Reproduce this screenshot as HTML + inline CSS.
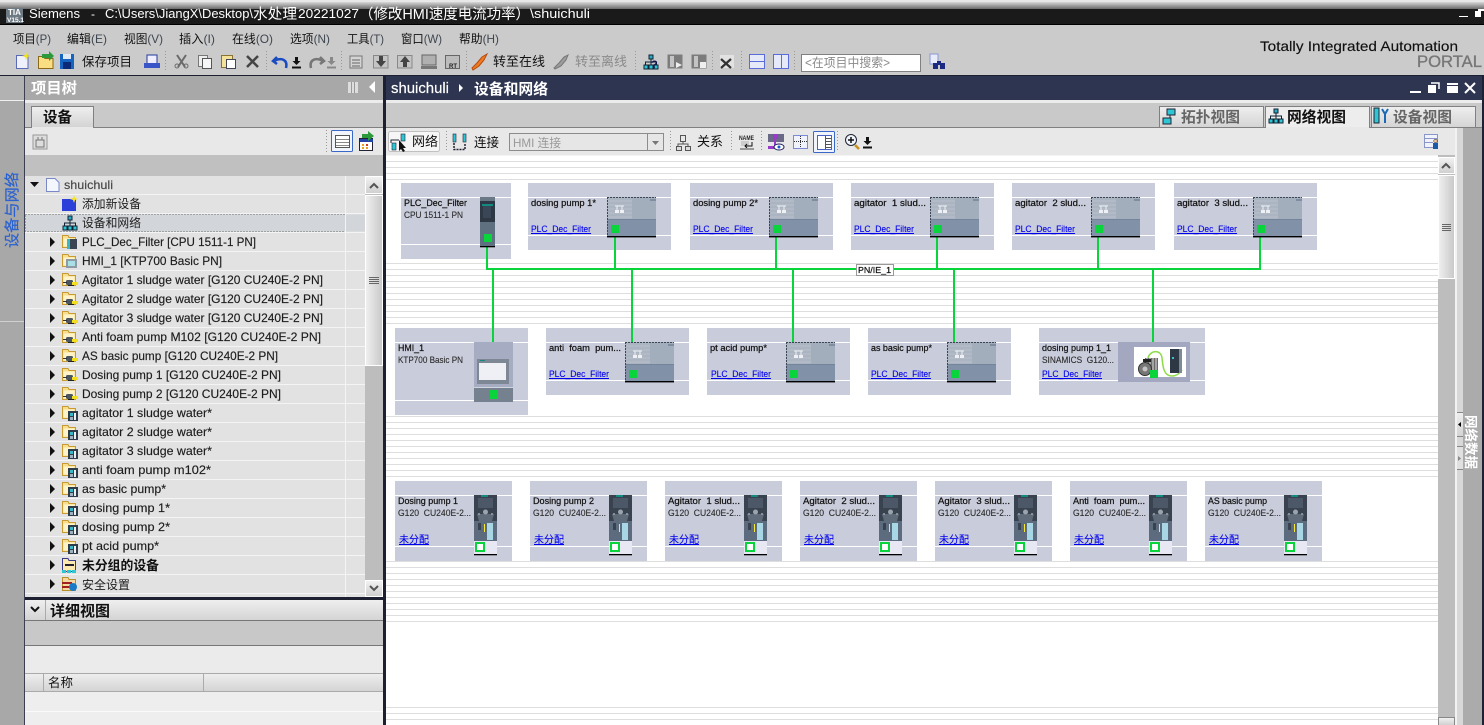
<!DOCTYPE html>
<html><head><meta charset="utf-8"><title>Siemens TIA Portal</title>
<style>
html,body{margin:0;padding:0;background:#fff;width:1484px;height:725px;overflow:hidden}
svg{display:block}
text{font-family:"Liberation Sans","Noto Sans CJK SC",sans-serif;font-size:12px;fill:#222;white-space:pre}
.m{font-size:12px;fill:#111}
.m tspan{fill:#3e4650}
.w{fill:#fff}
.b{font-weight:bold}
.d{font-size:9px;fill:#111;stroke:#111;stroke-width:.22px}
.ds{font-size:9px;fill:#2c2c2c;stroke:#2c2c2c;stroke-width:.12px}
.l{font-size:9px;fill:#0000ee;stroke:#0000ee;stroke-width:.1px}
.g{fill:#8a8a8a}
.tr{font-size:12px;fill:#1c1c1c;stroke:#1c1c1c;stroke-width:.15px}
</style></head><body>
<svg width="1484" height="725" viewBox="0 0 1484 725" xmlns="http://www.w3.org/2000/svg">
<defs>
<linearGradient id="gt" x1="0" y1="0" x2="0" y2="1"><stop offset="0" stop-color="#d8d8d8"/><stop offset="1" stop-color="#6a6a6a"/></linearGradient>
<linearGradient id="gh" x1="0" y1="0" x2="0" y2="1"><stop offset="0" stop-color="#efefef"/><stop offset="1" stop-color="#d4d4d4"/></linearGradient>
<linearGradient id="gs" x1="0" y1="0" x2="1" y2="0"><stop offset="0" stop-color="#f0f0f0"/><stop offset="1" stop-color="#c8c8c8"/></linearGradient>
<linearGradient id="gv" x1="0" y1="0" x2="0" y2="1"><stop offset="0" stop-color="#f2f2f2"/><stop offset="1" stop-color="#cfcfcf"/></linearGradient>
<pattern id="hl" x="386" y="161" width="10" height="6" patternUnits="userSpaceOnUse"><rect width="10" height="1" fill="#dedede"/></pattern>

<symbol id="drv" width="49" height="41" viewBox="0 0 49 41">
<rect width="49" height="40" fill="#a3aebc"/><rect width="25" height="22" fill="#abb5c2"/>
<path d="M1 4H25M1 8H25M1 12H25M1 16H25M1 20H25" stroke="#b7c0cb" stroke-width="1"/>
<rect y="22" width="49" height="18" fill="#8191a8"/><rect y="22" width="49" height="1" fill="#74849b"/>
<rect x="43" y="2" width="6" height="2" fill="#7f8da0"/>
<path d="M8 9H17M10 9V13M15 9V13" stroke="#eef0f3" fill="none"/><rect x="8" y="13" width="4" height="3" fill="#eef0f3"/><rect x="13" y="13" width="4" height="3" fill="#eef0f3"/>
<path d="M0 .5H49M.5 0V39" stroke="#3d4655" stroke-dasharray="2 1" fill="none"/>
<rect y="39" width="49" height="1.4" fill="#000"/>
<rect x="4" y="28" width="8" height="8" fill="#0ad43c"/>
</symbol>

<symbol id="g120" width="23" height="61" viewBox="0 0 23 61">
<rect width="23" height="60" fill="#5d6b7e"/><rect width="23" height="26" fill="#39434f"/>
<rect x="7" y="0" width="7" height="2" fill="#128a80"/><rect x="4" y="3" width="15" height="10" fill="#4c5868"/>
<path d="M3 19H20L18 26H5Z" fill="#5f6b79"/><circle cx="11.500" cy="17" r="2.500" fill="#9aa4ae"/>
<circle cx="5" cy="19" r="1" fill="#98a2ad"/><circle cx="18" cy="19" r="1" fill="#98a2ad"/>
<rect x="13" y="28" width="6" height="17" fill="#a8d6e4"/><rect x="4" y="28" width="3" height="7" fill="#39434f"/><rect x="10" y="29" width="1" height="8" fill="#f4e63c"/>
<rect y="46" width="23" height="13" fill="#e8e8f4"/>
<rect x="2" y="48" width="8" height="8" fill="#fff" stroke="#0ad43c" stroke-width="2"/>
<rect y="59" width="23" height="1.300" fill="#000"/>
</symbol>

<symbol id="fold" width="16" height="16" viewBox="0 0 16 16">
<path d="M.5 1.500H6L7 3.500H13.500V13.500H.5Z" fill="#f8df90" stroke="#c89a30"/><rect x="1.500" y="4.500" width="11" height="8" fill="#fff3c9"/>
</symbol>
<symbol id="fc" width="16" height="16" viewBox="0 0 16 16"><use href="#fold"/><rect x="5" y="5" width="10" height="10" fill="#3a4653"/><rect x="5" y="5" width="3" height="10" fill="#39b8c8"/></symbol>
<symbol id="fh" width="16" height="16" viewBox="0 0 16 16"><use href="#fold"/><rect x="4" y="6" width="11" height="9" fill="#8e9aa6"/><rect x="6" y="8" width="7" height="5" fill="#a8e0e6"/></symbol>
<symbol id="fa" width="16" height="16" viewBox="0 0 16 16"><use href="#fold"/><rect x="4" y="8" width="7" height="5" rx="1.500" fill="#4c5660"/><rect x="1" y="10" width="4" height="1" fill="#333"/><rect x="10" y="10" width="6" height="3" fill="#f2e01e"/><rect x="6" y="13" width="6" height="1" fill="#222"/></symbol>
<symbol id="fb" width="16" height="16" viewBox="0 0 16 16"><use href="#fold"/><rect x="6" y="6" width="10" height="10" fill="#2f3c49"/><rect x="8" y="8" width="3" height="3" fill="#39b8c8"/><rect x="12" y="8" width="2" height="7" fill="#eef0f3"/><rect x="8" y="12" width="3" height="3" fill="#9fb2c0"/></symbol>
<symbol id="net" width="16" height="16" viewBox="0 0 16 16"><rect x="6" y="1" width="4" height="4" fill="#2aa8c4" stroke="#123"/><path d="M8 5V8M2.500 11V8H13.500V11M8 8V11" stroke="#123" fill="none"/><rect x="1" y="11" width="4" height="4" fill="#2ec6d4" stroke="#123"/><rect x="6" y="11" width="4" height="4" fill="#2ec6d4" stroke="#123"/><rect x="11" y="11" width="4" height="4" fill="#2ec6d4" stroke="#123"/></symbol>
<symbol id="gr" width="16" height="16" viewBox="0 0 16 16"><rect x="1" y="2" width="12" height="12" fill="#d4d4d4" stroke="#777"/><path d="M3 6H11M3 9H11M3 12H11" stroke="#666"/></symbol>
<symbol id="dl" width="9" height="12" viewBox="0 0 9 12"><path d="M3 0H6V4H8.500L4.500 8L.5 4H3ZM0 9.500H9V11.500H0Z"/></symbol>
</defs>

<!-- window chrome -->
<rect width="1484" height="725" fill="#fff"/>
<rect width="1484" height="2" fill="#e8e8e8"/><rect y="2" width="1484" height="7" fill="url(#gt)"/>
<rect y="9" width="1484" height="15" fill="#1a1a1a"/>
<rect x="6" y="8" width="17" height="15" fill="#6d7a84"/>
<text x="8" y="15" style="font-size:8px" class="w b">TIA</text><text x="7" y="22" style="font-size:6.500px" class="w b">V15.1</text>
<text x="29" y="18" class="w" style="font-size:13px" textLength="51" lengthAdjust="spacingAndGlyphs">Siemens</text>
<text x="91" y="18" class="w">-</text>
<text x="105" y="18" class="w" style="font-size:13px" textLength="148" lengthAdjust="spacingAndGlyphs">C:\Users\JiangX\Desktop\</text>
<text x="253" y="19" class="w" style="font-size:14.500px" textLength="44" lengthAdjust="spacingAndGlyphs">水处理</text>
<text x="298" y="18" class="w" style="font-size:13px" textLength="61" lengthAdjust="spacingAndGlyphs">20221027</text>
<text x="359" y="19" class="w" style="font-size:14.500px" textLength="171" lengthAdjust="spacingAndGlyphs">（修改HMI速度电流功率）</text>
<text x="530" y="18" class="w" style="font-size:13px" textLength="60" lengthAdjust="spacingAndGlyphs">\shuichuli</text>
<rect x="1459" y="16" width="9" height="1" fill="#fff"/><rect x="1475" y="11" width="6" height="6" fill="#fff"/><rect x="1478" y="9" width="6" height="2" fill="#fff"/>

<rect y="24.500" width="1484" height="51" fill="#cbcbcb"/>
<rect y="24" width="1484" height="1" fill="#000"/>
<g class="menu">
<text x="13" y="43" class="m" textLength="38" lengthAdjust="spacingAndGlyphs">项目<tspan>(P)</tspan></text>
<text x="67" y="43" class="m" textLength="40" lengthAdjust="spacingAndGlyphs">编辑<tspan>(E)</tspan></text>
<text x="124" y="43" class="m" textLength="39" lengthAdjust="spacingAndGlyphs">视图<tspan>(V)</tspan></text>
<text x="179" y="43" class="m" textLength="36" lengthAdjust="spacingAndGlyphs">插入<tspan>(I)</tspan></text>
<text x="232" y="43" class="m" textLength="41" lengthAdjust="spacingAndGlyphs">在线<tspan>(O)</tspan></text>
<text x="290" y="43" class="m" textLength="40" lengthAdjust="spacingAndGlyphs">选项<tspan>(N)</tspan></text>
<text x="347" y="43" class="m" textLength="37" lengthAdjust="spacingAndGlyphs">工具<tspan>(T)</tspan></text>
<text x="401" y="43" class="m" textLength="41" lengthAdjust="spacingAndGlyphs">窗口<tspan>(W)</tspan></text>
<text x="459" y="43" class="m" textLength="40" lengthAdjust="spacingAndGlyphs">帮助<tspan>(H)</tspan></text>
</g>

<!-- toolbar icons -->
<path d="M16.500 55.500H28V68.500H16.500Z" fill="#eef1fb" stroke="#5a6ab8"/><path d="M26 52L27 55L30 56L27 57L26 60L25 57L22 56L25 55Z" fill="#f2e41c"/>
<path d="M38.500 56.500H43L45 58.500H53V68.500H38.500Z" fill="#f9df82" stroke="#8a6a18"/><path d="M42 54H49V51L54 56L49 61V58H42Z" fill="#2c9a3a"/>
<rect x="60" y="54" width="14" height="15" fill="#1565c0"/><rect x="63" y="54" width="8" height="5" fill="#dfe9f6"/><rect x="63" y="62" width="8" height="7" fill="#0a2a78"/>
<text x="82" y="66" class="m" style="font-size:12.500px" textLength="50" lengthAdjust="spacingAndGlyphs">保存项目</text>
<rect x="147" y="55" width="10" height="9" fill="#eef" stroke="#223a9c"/><rect x="144" y="63" width="16" height="5" fill="#3a55c8"/>
<path d="M165.500 51V72M266.500 51V72M341.500 51V72M466.500 51V72M635.500 51V72M712.500 51V72M741.500 51V72M794.500 51V72" stroke="#999" stroke-dasharray="1 2"/>
<path d="M177 55L185 67M186 55L178 67" stroke="#6a6a6a" stroke-width="2"/><circle cx="177" cy="66" r="2" fill="none" stroke="#6a6a6a"/><circle cx="186" cy="66" r="2" fill="none" stroke="#6a6a6a"/>
<rect x="198.500" y="55.500" width="9" height="11" fill="#eee" stroke="#777"/><rect x="202.500" y="58.500" width="9" height="10" fill="#f6f6f6" stroke="#555"/>
<rect x="221.500" y="55.500" width="11" height="12" fill="#f4e19a" stroke="#8a7330"/><rect x="226.500" y="59.500" width="9" height="9" fill="#fff" stroke="#445"/>
<path d="M247 56L258 67M258 56L247 67" stroke="#444" stroke-width="2.500"/>
<path d="M277 57L273 61L277 64M274 61C282 57 288 60 286 68" fill="none" stroke="#1a4cc0" stroke-width="2.500"/>
<use href="#dl" x="292" y="57" fill="#111"/>
<path d="M320 57L324 61L320 64M323 61C315 57 309 60 311 68" fill="none" stroke="#777" stroke-width="2.500"/>
<use href="#dl" x="327" y="57" fill="#888"/>
<use href="#gr" x="349" y="54"/><path d="M373.500 55.500H388V68H373.500Z" fill="#c4c4c4" stroke="#888"/><path d="M379 56H383V61H386L381 67L376 61H379Z" fill="#444"/>
<path d="M397.500 55.500H412V68H397.500Z" fill="#c4c4c4" stroke="#888"/><path d="M403 67H407V62H410L405 56L400 62H403Z" fill="#444"/>
<rect x="422" y="55" width="14" height="10" fill="#b0b0b0" stroke="#666"/><rect x="421" y="66" width="16" height="3" fill="#777"/>
<rect x="445.500" y="55.500" width="14" height="13" fill="#bcbcbc" stroke="#666"/><text x="449" y="68" style="font-size:6px" class="b">RT</text>
<path d="M472 68L477 63L482 57L487 54L484 60L479 66L473 70Z" fill="#ef7a22" stroke="#b54b0a"/>
<text x="493" y="66" class="m" style="font-size:13px" textLength="52" lengthAdjust="spacingAndGlyphs">转至在线</text>
<path d="M554 68L559 63L564 57L568 55L566 60L561 66L555 69Z" fill="#9c9c9c" stroke="#777"/>
<text x="575" y="66" class="m g" style="font-size:13px" textLength="52" lengthAdjust="spacingAndGlyphs">转至离线</text>
<use href="#net" x="643" y="54"/><text x="651" y="68" class="b" style="font-size:11px;fill:#111150">?</text>
<rect x="667.500" y="54.500" width="15" height="14" fill="#7c7c7c"/><rect x="670" y="56" width="4" height="11" fill="#c4c4c4"/><path d="M676 62L682 65L676 68Z" fill="#eee"/>
<rect x="691.500" y="54.500" width="15" height="14" fill="#7c7c7c"/><rect x="694" y="56" width="4" height="11" fill="#c4c4c4"/><rect x="700" y="62" width="6" height="6" fill="#eee"/>
<rect x="720" y="55" width="14" height="13" fill="#e2e2e2"/><path d="M721 59L731 68M731 59L721 68" stroke="#333" stroke-width="2.200"/>
<rect x="749.500" y="54.500" width="15" height="14" fill="#e6e9f8" stroke="#5a6cd8"/><path d="M749 61.500H765" stroke="#5a6cd8"/>
<rect x="773.500" y="54.500" width="15" height="14" fill="#e6e9f8" stroke="#5a6cd8"/><path d="M781.500 54V69" stroke="#5a6cd8"/>
<rect x="801.500" y="54.500" width="119" height="17" fill="#fff" stroke="#808080"/>
<text x="805" y="67" class="m g" style="font-size:12.500px" textLength="85" lengthAdjust="spacingAndGlyphs">&lt;在项目中搜索&gt;</text>
<rect x="930" y="54" width="8" height="10" fill="#e8ecfa" stroke="#8898d8"/><rect x="933" y="63" width="5" height="6" fill="#1a2a80"/><rect x="940" y="63" width="5" height="6" fill="#1a2a80"/><rect x="937" y="61" width="4" height="4" fill="#1a2a80"/>

<text x="1260" y="51" style="font-size:14px;fill:#111;stroke:#111;stroke-width:.15px" textLength="198" lengthAdjust="spacingAndGlyphs">Totally Integrated Automation</text>
<text x="1417" y="67" style="font-size:17px;fill:#777;stroke:#777;stroke-width:.35px" textLength="65" lengthAdjust="spacingAndGlyphs">PORTAL</text>
<rect y="75" width="1484" height="1" fill="#1c2030"/>

<!-- left strip -->
<rect y="76" width="24" height="649" fill="#a8a8a8"/><rect y="76" width="24" height="24" fill="#b2b2b2"/>
<rect y="100" width="24" height="1" fill="#efefef"/><rect y="321" width="24" height="1" fill="#cfcfcf"/>
<rect x="24" y="76" width="1" height="649" fill="#3a3f52"/>
<text transform="translate(17,248) rotate(-90)" style="font-size:15px;fill:#2a62d0;stroke:#2a62d0;stroke-width:.2px" textLength="76" lengthAdjust="spacingAndGlyphs">设备与网络</text>

<!-- project tree -->
<rect x="25" y="76" width="358" height="24" fill="#a8a8a8"/>
<text x="31" y="93" class="w b" style="font-size:15px" textLength="46" lengthAdjust="spacingAndGlyphs">项目树</text>
<rect x="348" y="82" width="10" height="11" fill="#ddd"/><path d="M351.500 82V93M354.500 82V93" stroke="#999"/>
<path d="M375 81V93L369 87Z" fill="#fff"/>
<rect x="25" y="100" width="358" height="3" fill="#ececec"/>
<rect x="25" y="103" width="358" height="24" fill="#c9c9c9"/>
<path d="M31.500 127V106.500H93.500V127" fill="url(#gh)" stroke="#808080"/>
<text x="43" y="122" class="b" style="font-size:15px;fill:#111" textLength="29" lengthAdjust="spacingAndGlyphs">设备</text>
<rect x="25" y="127" width="358" height="1" fill="#808080"/><rect x="32" y="127" width="61" height="1" fill="#e8e8e8"/>
<rect x="25" y="128" width="358" height="27" fill="#e8e8e8"/>
<rect x="33" y="135" width="14" height="14" fill="#ddd" stroke="#999"/><path d="M36 140H44V147H36ZM38 137V140M42 137V140" fill="none" stroke="#777"/>
<path d="M326.500 130V153" stroke="#999" stroke-dasharray="1 2"/>
<rect x="331.500" y="130.500" width="21" height="21" rx="1" fill="#f2f4fc" stroke="#3a68c8"/><rect x="335.500" y="135.500" width="14" height="12" fill="#fff" stroke="#555"/><path d="M336 139.500H349M336 142.500H349M336 145.500H349" stroke="#888"/>
<rect x="359.500" y="138.500" width="13" height="12" fill="#fff" stroke="#223"/><rect x="360" y="139" width="13" height="3" fill="#2244aa"/><rect x="362" y="144" width="2" height="2" fill="#e8a020"/><rect x="366" y="144" width="2" height="2" fill="#d04020"/><rect x="362" y="147" width="2" height="2" fill="#e8a020"/><rect x="366" y="147" width="2" height="2" fill="#e8a020"/>
<path d="M362 134H368V131L374 136L368 141V138H362Z" fill="#2c9a3a"/>
<rect x="25" y="155" width="358" height="21" fill="#c0c0c0"/>

<rect x="25" y="176" width="340" height="421" fill="#e2e2e2"/>
<path d="M25 194.500H365M25 213.500H365M25 232.500H365M25 251.500H365M25 270.500H365M25 289.500H365M25 308.500H365M25 327.500H365M25 346.500H365M25 365.500H365M25 384.500H365M25 403.500H365M25 422.500H365M25 441.500H365M25 460.500H365M25 479.500H365M25 498.500H365M25 517.500H365M25 536.500H365M25 555.500H365M25 574.500H365M25 593.500H365" stroke="#f4f4f4"/>
<rect x="25.500" y="214.500" width="340" height="17" fill="#d2d6da"/>
<path d="M25.500 214.500H345.500V231.500H25.500Z" fill="none" stroke="#666" stroke-dasharray="1 2"/>
<path d="M345.500 176V597" stroke="#f4f4f4"/>
<path d="M30 182H39L34.500 187Z" fill="#111"/>
<path d="M46.500 178.500H55L59 182.500V191.500H46.500Z" fill="#f4f6fe" stroke="#7a88c8"/>
<text x="64" y="189" class="tr" style="fill:#444;stroke:#444" textLength="49" lengthAdjust="spacingAndGlyphs">shuichuli</text>
<rect x="62" y="199" width="14" height="12" fill="#2a40d8"/><path d="M74 195L75 198L78 199L75 200L74 203L73 200L70 199L73 198Z" fill="#f5e42a"/>
<text x="82" y="208" class="tr" style="stroke-width:0" textLength="59" lengthAdjust="spacingAndGlyphs">添加新设备</text>
<use href="#net" x="62" y="215"/>
<text x="82" y="227" class="tr" style="stroke-width:0" textLength="59" lengthAdjust="spacingAndGlyphs">设备和网络</text>

<!-- arrows -->
<path d="M50 237L55 242L50 247ZM50 256L55 261L50 266ZM50 275L55 280L50 285ZM50 294L55 299L50 304ZM50 313L55 318L50 323ZM50 332L55 337L50 342ZM50 351L55 356L50 361ZM50 370L55 375L50 380ZM50 389L55 394L50 399ZM50 408L55 413L50 418ZM50 427L55 432L50 437ZM50 446L55 451L50 456ZM50 465L55 470L50 475ZM50 484L55 489L50 494ZM50 503L55 508L50 513ZM50 522L55 527L50 532ZM50 541L55 546L50 551ZM50 560L55 565L50 570ZM50 579L55 584L50 589Z" fill="#111"/>

<use href="#fc" x="62" y="234"/><use href="#fh" x="62" y="253"/>
<use href="#fa" x="62" y="272"/><use href="#fa" x="62" y="291"/><use href="#fa" x="62" y="310"/><use href="#fa" x="62" y="329"/><use href="#fa" x="62" y="348"/><use href="#fa" x="62" y="367"/><use href="#fa" x="62" y="386"/>
<use href="#fb" x="62" y="405"/><use href="#fb" x="62" y="424"/><use href="#fb" x="62" y="443"/><use href="#fb" x="62" y="462"/><use href="#fb" x="62" y="481"/><use href="#fb" x="62" y="500"/><use href="#fb" x="62" y="519"/><use href="#fb" x="62" y="538"/>
<path d="M62.500 558.500H68L69 560.500H75.500V571.500H62.500Z" fill="#fbe9ae" stroke="#3a3a8a"/><path d="M65 565H74" stroke="#223" stroke-width="2"/><rect x="62" y="570" width="4" height="3" fill="#2ec6d4"/><rect x="67" y="570" width="4" height="3" fill="#2ec6d4"/><rect x="72" y="570" width="4" height="3" fill="#2ec6d4"/>
<path d="M62.500 577.500H68L69 579.500H75.500V590.500H62.500Z" fill="#f4d8a0" stroke="#b98e2c"/><rect x="62" y="582" width="10" height="2" fill="#a02020"/><rect x="62" y="586" width="8" height="2" fill="#a02020"/><circle cx="73" cy="587" r="4" fill="#1a7ac8"/>

<text x="82" y="246" class="tr" textLength="174" lengthAdjust="spacingAndGlyphs">PLC_Dec_Filter [CPU 1511-1 PN]</text>
<text x="82" y="265" class="tr" textLength="140" lengthAdjust="spacingAndGlyphs">HMI_1 [KTP700 Basic PN]</text>
<text x="82" y="284" class="tr" textLength="241" lengthAdjust="spacingAndGlyphs">Agitator 1 sludge water [G120 CU240E-2 PN]</text>
<text x="82" y="303" class="tr" textLength="241" lengthAdjust="spacingAndGlyphs">Agitator 2 sludge water [G120 CU240E-2 PN]</text>
<text x="82" y="322" class="tr" textLength="241" lengthAdjust="spacingAndGlyphs">Agitator 3 sludge water [G120 CU240E-2 PN]</text>
<text x="82" y="341" class="tr" textLength="239" lengthAdjust="spacingAndGlyphs">Anti foam pump M102 [G120 CU240E-2 PN]</text>
<text x="82" y="360" class="tr" textLength="196" lengthAdjust="spacingAndGlyphs">AS basic pump [G120 CU240E-2 PN]</text>
<text x="82" y="379" class="tr" textLength="199" lengthAdjust="spacingAndGlyphs">Dosing pump 1 [G120 CU240E-2 PN]</text>
<text x="82" y="398" class="tr" textLength="199" lengthAdjust="spacingAndGlyphs">Dosing pump 2 [G120 CU240E-2 PN]</text>
<text x="82" y="417" class="tr" textLength="130" lengthAdjust="spacingAndGlyphs">agitator 1 sludge water*</text>
<text x="82" y="436" class="tr" textLength="130" lengthAdjust="spacingAndGlyphs">agitator 2 sludge water*</text>
<text x="82" y="455" class="tr" textLength="130" lengthAdjust="spacingAndGlyphs">agitator 3 sludge water*</text>
<text x="82" y="474" class="tr" textLength="129" lengthAdjust="spacingAndGlyphs">anti foam pump m102*</text>
<text x="82" y="493" class="tr" textLength="84" lengthAdjust="spacingAndGlyphs">as basic pump*</text>
<text x="82" y="512" class="tr" textLength="88" lengthAdjust="spacingAndGlyphs">dosing pump 1*</text>
<text x="82" y="531" class="tr" textLength="88" lengthAdjust="spacingAndGlyphs">dosing pump 2*</text>
<text x="82" y="550" class="tr" textLength="77" lengthAdjust="spacingAndGlyphs">pt acid pump*</text>
<text x="82" y="570" class="b" style="font-size:13px;fill:#111" textLength="77" lengthAdjust="spacingAndGlyphs">未分组的设备</text>
<text x="82" y="589" class="tr" style="stroke-width:0" textLength="48" lengthAdjust="spacingAndGlyphs">安全设置</text>

<!-- tree scrollbar -->
<rect x="365" y="176" width="18" height="421" fill="#bdbdbd"/>
<rect x="365.500" y="176.500" width="17" height="17" fill="url(#gv)" stroke="#fff"/>
<path d="M370 188L374 184L378 188" fill="none" stroke="#555" stroke-width="2"/>
<rect x="365.500" y="195.500" width="17" height="170" fill="url(#gs)" stroke="#fff"/>
<path d="M369 277.500H379M369 279.500H379M369 281.500H379M369 283.500H379" stroke="#666"/>
<rect x="365.500" y="580.500" width="17" height="16" fill="url(#gv)" stroke="#fff"/>
<path d="M370 586L374 590L378 586" fill="none" stroke="#555" stroke-width="2"/>

<!-- detail view -->
<rect x="25" y="597" width="358" height="3" fill="#1c2030"/>
<rect x="25" y="600" width="358" height="20" fill="url(#gh)"/>
<path d="M45.500 600V620" stroke="#aaa"/>
<path d="M31 607L35 611L39 607" fill="none" stroke="#111" stroke-width="2"/>
<text x="50" y="616" class="b" style="font-size:15px;fill:#111" textLength="60" lengthAdjust="spacingAndGlyphs">详细视图</text>
<rect x="25" y="620" width="358" height="1" fill="#777"/>
<rect x="25" y="621" width="358" height="24" fill="#c8c8c8"/>
<rect x="25" y="645" width="358" height="1" fill="#777"/>
<rect x="25" y="646" width="358" height="27" fill="#ebebeb"/>
<rect x="25" y="673" width="358" height="18" fill="url(#gh)"/>
<path d="M25 673.500H383M25 691.500H383M43.500 673V691M203.500 673V691" stroke="#aaa"/>
<text x="48" y="687" class="m" style="font-size:12.500px" textLength="25" lengthAdjust="spacingAndGlyphs">名称</text>
<rect x="25" y="692" width="358" height="33" fill="#eeeeee"/>
<rect x="25" y="711" width="358" height="1" fill="#fafafa"/>
<rect x="383" y="76" width="3" height="649" fill="#1c2030"/>

<!-- editor header -->
<rect x="386" y="76" width="1096" height="24" fill="#2e3550"/>
<text x="391" y="93" class="w" style="font-size:15px;stroke:#fff;stroke-width:.2px" textLength="58" lengthAdjust="spacingAndGlyphs">shuichuli</text>
<path d="M459 84L463 88L459 92Z" fill="#fff"/>
<text x="474" y="94" class="w b" style="font-size:15px" textLength="74" lengthAdjust="spacingAndGlyphs">设备和网络</text>
<rect x="1410" y="91" width="11" height="2" fill="#fff"/>
<rect x="1428" y="85" width="8" height="8" fill="#fff"/><path d="M1431 83H1439V89" fill="none" stroke="#fff" stroke-width="1.500"/>
<rect x="1447" y="83" width="11" height="10" fill="#fff"/><rect x="1447" y="85" width="11" height="1" fill="#2e3550"/>
<path d="M1465 83L1475 93M1475 83L1465 93" stroke="#fff" stroke-width="2"/>
<rect x="386" y="100" width="1096" height="3" fill="#ececec"/>
<rect x="386" y="103" width="1096" height="24" fill="#c9c9c9"/>
<rect x="386" y="127" width="1096" height="1" fill="#808080"/>

<!-- view tabs -->
<rect x="1159.500" y="106.500" width="104" height="21" fill="url(#gh)" stroke="#808080"/>
<rect x="1167" y="109" width="8" height="6" fill="#2ec6d4" stroke="#223"/><rect x="1163" y="118" width="8" height="6" fill="#2ec6d4" stroke="#223"/><path d="M1170 115V118" stroke="#223"/>
<text x="1181" y="122" class="b" style="font-size:15px;fill:#666" textLength="59" lengthAdjust="spacingAndGlyphs">拓扑视图</text>
<path d="M1265.500 128V106.500H1369.500V128" fill="#ededed" stroke="#808080"/><rect x="1266" y="127" width="103" height="2" fill="#e8e8e8"/>
<use href="#net" x="1268" y="108"/>
<text x="1287" y="122" class="b" style="font-size:15px;fill:#111" textLength="59" lengthAdjust="spacingAndGlyphs">网络视图</text>
<rect x="1371.500" y="106.500" width="104" height="21" fill="url(#gh)" stroke="#808080"/>
<rect x="1374" y="108" width="5" height="15" fill="#2ec6d4" stroke="#223"/><path d="M1382 109L1385 114L1388 109M1385 114V123" fill="none" stroke="#1a6ab8" stroke-width="2"/>
<text x="1393" y="122" class="b" style="font-size:15px;fill:#666" textLength="59" lengthAdjust="spacingAndGlyphs">设备视图</text>

<!-- editor toolbar -->
<rect x="386" y="128" width="1070" height="27" fill="#e8e8e8"/>
<rect x="388.500" y="131.500" width="51" height="20" rx="2" fill="#f6f6f6" stroke="#c0c0c0"/>
<rect x="392" y="143" width="4" height="7" fill="#2ec6d4" stroke="#223" stroke-width=".6"/><rect x="401" y="134" width="4" height="7" fill="#2ec6d4" stroke="#223" stroke-width=".6"/><path d="M391 143V140H399" fill="none" stroke="#223"/><path d="M399 140L399 151L401 149L403 152L405 151L403 148L406 148Z" fill="#111"/>
<text x="412" y="146" class="m" style="font-size:13px" textLength="26" lengthAdjust="spacingAndGlyphs">网络</text>
<path d="M446.500 131V152M670.500 131V152M731.500 131V152M761.500 131V152M837.500 131V152" stroke="#999" stroke-dasharray="1 2"/>
<rect x="453" y="134" width="3" height="8" fill="#2ec6d4" stroke="#223" stroke-width=".6"/><rect x="463" y="134" width="3" height="8" fill="#2ec6d4" stroke="#223" stroke-width=".6"/><path d="M454 143V149.500H465V143" fill="none" stroke="#223" stroke-width="1.500" stroke-dasharray="2 1"/>
<text x="474" y="147" class="m" style="font-size:13px" textLength="25" lengthAdjust="spacingAndGlyphs">连接</text>
<rect x="509.500" y="133.500" width="154" height="17" fill="#e6e6e6" stroke="#8c8c8c"/><path d="M647.500 134V150" stroke="#8c8c8c"/>
<path d="M652 141H659L655.500 145Z" fill="#777"/>
<text x="513" y="147" class="m" style="fill:#999" textLength="48" lengthAdjust="spacingAndGlyphs">HMI 连接</text>
<rect x="680.500" y="135.500" width="5" height="6" fill="none" stroke="#555"/><path d="M683 141V144M678 148V144H688V148" fill="none" stroke="#555"/><rect x="676.500" y="146.500" width="5" height="4" fill="#ddd" stroke="#555"/><rect x="685.500" y="146.500" width="5" height="4" fill="#ddd" stroke="#555"/>
<text x="697" y="146" class="m" style="font-size:13px" textLength="26" lengthAdjust="spacingAndGlyphs">关系</text>
<text x="739" y="140" class="b" style="font-size:6px;fill:#222" textLength="15" lengthAdjust="spacingAndGlyphs">NAME</text><path d="M741 141V146H749V141" fill="#ccc"/><path d="M752 142V146H745M747 144L745 146L747 148" fill="none" stroke="#111"/><rect x="740" y="148" width="14" height="2" fill="#999"/>
<rect x="768" y="134" width="16" height="8" fill="#6a6a88"/><rect x="773" y="134" width="5" height="5" fill="#9a3ac8"/><path d="M775 139V147" stroke="#9a3ac8" stroke-width="2"/><rect x="768" y="146" width="9" height="3" fill="#9a3ac8"/><ellipse cx="779" cy="147" rx="5" ry="3" fill="#fff" stroke="#226"/><circle cx="779" cy="147" r="1.500" fill="#1a5ac8"/>
<rect x="793.500" y="135.500" width="14" height="13" fill="#f0f2fc" stroke="#7a8ad8"/><path d="M794 141.500H807M800.500 136V148" stroke="#333" stroke-dasharray="1 1"/>
<rect x="813.500" y="131.500" width="21" height="21" rx="1" fill="#f2f4fc" stroke="#3a68c8"/><rect x="817.500" y="135.500" width="14" height="14" fill="#fff" stroke="#4a62c0"/><path d="M825.500 136V149M826 138.500H831M826 141.500H831M826 144.500H831M826 147.500H831" stroke="#555"/>
<circle cx="851" cy="140" r="5.500" fill="#eef4fc" stroke="#223"/><path d="M848 140H854M851 137V143" stroke="#111" stroke-width="1.500"/><path d="M855 145L859 149" stroke="#c89020" stroke-width="2.500"/>
<use href="#dl" x="863" y="137" fill="#111"/>
<rect x="1424.500" y="134.500" width="13" height="13" fill="#f0f2fc" stroke="#8a96c8"/><path d="M1425 138.500H1437M1425 142.500H1433" stroke="#8a96c8"/><rect x="1433" y="143" width="5" height="6" fill="#1a5aa8"/><circle cx="1435.500" cy="141" r="1.800" fill="#f0c8a0" stroke="#222" stroke-width=".5"/>

<!-- canvas -->
<rect x="386" y="155" width="1052" height="570" fill="#fff"/>
<rect x="386" y="155" width="1052" height="1" fill="#f4f4f4"/>
<rect x="386" y="161" width="1052" height="19" fill="url(#hl)"/>
<rect x="386" y="263" width="1052" height="61" fill="url(#hl)"/>
<g>
<path d="M386 416.500H1438M386 422.500H1438M386 428.500H1438M386 434.500H1438M386 440.500H1438M386 446.500H1438M386 452.500H1438M386 458.500H1438M386 464.500H1438M386 470.500H1438M386 476.500H1438M386 561.500H1438M386 567.500H1438M386 573.500H1438M386 579.500H1438M386 585.500H1438M386 591.500H1438M386 597.500H1438M386 603.500H1438M386 609.500H1438M386 615.500H1438M386 621.500H1438M386 707.500H1438M386 713.500H1438M386 719.500H1438" stroke="#dedede"/>
</g>

<!-- device boxes row 1 -->
<g fill="#c9ccda">
<rect x="401" y="183" width="110" height="76"/>
<rect x="528" y="183" width="143" height="67"/><rect x="690" y="183" width="143" height="67"/><rect x="851" y="183" width="143" height="67"/><rect x="1012" y="183" width="143" height="67"/><rect x="1174" y="183" width="143" height="67"/>
<rect x="395" y="328" width="133" height="87"/>
<rect x="546" y="328" width="143" height="67"/><rect x="707" y="328" width="143" height="67"/><rect x="868" y="328" width="143" height="67"/><rect x="1039" y="328" width="166" height="67"/>
<rect x="395" y="481" width="117" height="80"/><rect x="530" y="481" width="117" height="80"/><rect x="665" y="481" width="117" height="80"/><rect x="800" y="481" width="117" height="80"/><rect x="935" y="481" width="117" height="80"/><rect x="1070" y="481" width="117" height="80"/><rect x="1205" y="481" width="117" height="80"/>
</g>
<g stroke="#fff">
<path d="M401 197.500H511M401 244.500H511M528 197.500H671M528 235.500H671M690 197.500H833M690 235.500H833M851 197.500H994M851 235.500H994M1012 197.500H1155M1012 235.500H1155M1174 197.500H1317M1174 235.500H1317"/>
<path d="M395 342.500H528M395 400.500H528M546 342.500H689M546 380.500H689M707 342.500H850M707 380.500H850M868 342.500H1011M868 380.500H1011M1039 342.500H1205M1039 380.500H1205"/>
<path d="M395 495.500H512M395 546.500H512M530 495.500H647M530 546.500H647M665 495.500H782M665 546.500H782M800 495.500H917M800 546.500H917M935 495.500H1052M935 546.500H1052M1070 495.500H1187M1070 546.500H1187M1205 495.500H1322M1205 546.500H1322"/>
</g>

<!-- bus -->
<g stroke="#0ad43c" stroke-width="2" fill="none">
<path d="M487 247V269H1260V237M615 237V269M776 237V269M937 237V269M1098 237V269"/>
<path d="M493 269V342M632 269V342M793 269V342M954 269V342M1153 269V342"/>
</g>
<rect x="856.500" y="264.500" width="37" height="11" fill="#fff" stroke="#999"/>
<text x="858" y="273" class="d" style="font-size:8.500px" textLength="33" lengthAdjust="spacingAndGlyphs">PN/IE_1</text>

<!-- PLC -->
<rect x="480" y="197" width="15" height="50" fill="#5f7080"/><rect x="480" y="197" width="15" height="25" fill="#2e3845"/><rect x="480" y="197" width="15" height="4" fill="#6b7886"/><rect x="482" y="204" width="11" height="2" fill="#128a80"/><rect x="483" y="206" width="8" height="12" fill="#3a4656"/><rect x="480" y="246" width="15" height="1.300" fill="#000"/>
<rect x="484" y="234" width="8" height="8" fill="#0ad43c"/>
<text x="404" y="206" class="d" textLength="63" lengthAdjust="spacingAndGlyphs">PLC_Dec_Filter</text>
<text x="404" y="218" class="ds" textLength="59" lengthAdjust="spacingAndGlyphs">CPU 1511-1 PN</text>

<use href="#drv" x="607" y="197"/><use href="#drv" x="769" y="197"/><use href="#drv" x="930" y="197"/><use href="#drv" x="1091" y="197"/><use href="#drv" x="1253" y="197"/>
<text x="531" y="206" class="d" textLength="65" lengthAdjust="spacingAndGlyphs">dosing pump 1*</text>
<text x="693" y="206" class="d" textLength="65" lengthAdjust="spacingAndGlyphs">dosing pump 2*</text>
<text x="854" y="206" class="d" textLength="72" lengthAdjust="spacingAndGlyphs">agitator  1 slud...</text>
<text x="1015" y="206" class="d" textLength="71" lengthAdjust="spacingAndGlyphs">agitator  2 slud...</text>
<text x="1177" y="206" class="d" textLength="71" lengthAdjust="spacingAndGlyphs">agitator  3 slud...</text>
<g class="links">
<text x="531" y="232" class="l" textLength="60" lengthAdjust="spacingAndGlyphs">PLC_Dec_Filter</text>
<text x="693" y="232" class="l" textLength="60" lengthAdjust="spacingAndGlyphs">PLC_Dec_Filter</text>
<text x="854" y="232" class="l" textLength="60" lengthAdjust="spacingAndGlyphs">PLC_Dec_Filter</text>
<text x="1015" y="232" class="l" textLength="60" lengthAdjust="spacingAndGlyphs">PLC_Dec_Filter</text>
<text x="1177" y="232" class="l" textLength="60" lengthAdjust="spacingAndGlyphs">PLC_Dec_Filter</text>
<text x="549" y="377" class="l" textLength="60" lengthAdjust="spacingAndGlyphs">PLC_Dec_Filter</text>
<text x="711" y="377" class="l" textLength="60" lengthAdjust="spacingAndGlyphs">PLC_Dec_Filter</text>
<text x="871" y="377" class="l" textLength="60" lengthAdjust="spacingAndGlyphs">PLC_Dec_Filter</text>
<text x="1042" y="377" class="l" textLength="60" lengthAdjust="spacingAndGlyphs">PLC_Dec_Filter</text>
</g>
<path d="M531 233.500H591M693 233.500H753M854 233.500H914M1015 233.500H1075M1177 233.500H1237M549 378.500H609M711 378.500H771M871 378.500H931M1042 378.500H1102" stroke="#0000ee"/>

<!-- row 2 -->
<rect x="474" y="342" width="39" height="60" fill="#a6adc2"/><rect x="474" y="388" width="39" height="14" fill="#75818f"/><rect x="474" y="387" width="39" height="1" fill="#d0d4de"/>
<rect x="477" y="359" width="32" height="25" fill="#7e8794"/><rect x="479" y="363" width="27" height="17" fill="#eef0f6"/><rect x="480" y="360" width="5" height="1" fill="#128a80"/>
<rect x="490" y="390" width="8" height="9" fill="#0ad43c"/>
<text x="398" y="351" class="d" textLength="26" lengthAdjust="spacingAndGlyphs">HMI_1</text>
<text x="398" y="363" class="ds" textLength="65" lengthAdjust="spacingAndGlyphs">KTP700 Basic PN</text>
<use href="#drv" x="625" y="342"/><use href="#drv" x="786" y="342"/><use href="#drv" x="947" y="342"/>
<text x="549" y="351" class="d" textLength="72" lengthAdjust="spacingAndGlyphs">anti  foam  pum...</text>
<text x="710" y="351" class="d" textLength="57" lengthAdjust="spacingAndGlyphs">pt acid pump*</text>
<text x="871" y="351" class="d" textLength="61" lengthAdjust="spacingAndGlyphs">as basic pump*</text>
<text x="1042" y="351" class="d" textLength="69" lengthAdjust="spacingAndGlyphs">dosing pump 1_1</text>
<text x="1042" y="363" class="ds" textLength="72" lengthAdjust="spacingAndGlyphs">SINAMICS  G120...</text>
<rect x="1118" y="342" width="72" height="40" fill="#a3a8c0"/><rect x="1134" y="347" width="52" height="30" fill="#fff"/>
<path d="M1148 358C1150 350 1161 349 1162 358C1163 368 1164 376 1172 376C1177 376 1180 373 1182 370" fill="none" stroke="#8edc4c" stroke-width="1.500"/>
<rect x="1145" y="358" width="13" height="13" fill="#6a6a6a"/><path d="M1147 358V371M1150 358V371M1153 358V371M1156 358V371" stroke="#ddd"/><rect x="1143" y="359" width="8" height="3" fill="#222"/>
<circle cx="1145" cy="369" r="6.500" fill="#777" stroke="#333"/><circle cx="1145" cy="369" r="2.500" fill="#c4c4c4"/>
<rect x="1170" y="349" width="12" height="24" fill="#2e3845"/><rect x="1179" y="349" width="3" height="24" fill="#7c8a96"/><rect x="1172" y="357" width="2" height="2" fill="#3dc0c8"/>
<rect x="1150" y="370" width="8" height="8" fill="#0ad43c"/>

<!-- row 3 -->
<use href="#g120" x="474" y="495"/><use href="#g120" x="609" y="495"/><use href="#g120" x="744" y="495"/><use href="#g120" x="879" y="495"/><use href="#g120" x="1014" y="495"/><use href="#g120" x="1149" y="495"/><use href="#g120" x="1284" y="495"/>
<text x="398" y="504" class="d" textLength="60" lengthAdjust="spacingAndGlyphs">Dosing pump 1</text>
<text x="533" y="504" class="d" textLength="61" lengthAdjust="spacingAndGlyphs">Dosing pump 2</text>
<text x="668" y="504" class="d" textLength="72" lengthAdjust="spacingAndGlyphs">Agitator  1 slud...</text>
<text x="803" y="504" class="d" textLength="72" lengthAdjust="spacingAndGlyphs">Agitator  2 slud...</text>
<text x="938" y="504" class="d" textLength="72" lengthAdjust="spacingAndGlyphs">Agitator  3 slud...</text>
<text x="1073" y="504" class="d" textLength="72" lengthAdjust="spacingAndGlyphs">Anti  foam  pum...</text>
<text x="1208" y="504" class="d" textLength="59" lengthAdjust="spacingAndGlyphs">AS basic pump</text>
<text x="398" y="516" class="ds" textLength="73" lengthAdjust="spacingAndGlyphs">G120  CU240E-2...</text>
<text x="533" y="516" class="ds" textLength="73" lengthAdjust="spacingAndGlyphs">G120  CU240E-2...</text>
<text x="668" y="516" class="ds" textLength="73" lengthAdjust="spacingAndGlyphs">G120  CU240E-2...</text>
<text x="803" y="516" class="ds" textLength="73" lengthAdjust="spacingAndGlyphs">G120  CU240E-2...</text>
<text x="938" y="516" class="ds" textLength="73" lengthAdjust="spacingAndGlyphs">G120  CU240E-2...</text>
<text x="1073" y="516" class="ds" textLength="73" lengthAdjust="spacingAndGlyphs">G120  CU240E-2...</text>
<text x="1208" y="516" class="ds" textLength="73" lengthAdjust="spacingAndGlyphs">G120  CU240E-2...</text>
<g style="font-size:10px">
<text x="399" y="543" class="l" style="font-size:10px" textLength="30" lengthAdjust="spacing">未分配</text>
<text x="534" y="543" class="l" style="font-size:10px" textLength="30" lengthAdjust="spacing">未分配</text>
<text x="669" y="543" class="l" style="font-size:10px" textLength="30" lengthAdjust="spacing">未分配</text>
<text x="804" y="543" class="l" style="font-size:10px" textLength="30" lengthAdjust="spacing">未分配</text>
<text x="939" y="543" class="l" style="font-size:10px" textLength="30" lengthAdjust="spacing">未分配</text>
<text x="1074" y="543" class="l" style="font-size:10px" textLength="30" lengthAdjust="spacing">未分配</text>
<text x="1209" y="543" class="l" style="font-size:10px" textLength="30" lengthAdjust="spacing">未分配</text>
</g>
<path d="M399 544.500H429M534 544.500H564M669 544.500H699M804 544.500H834M939 544.500H969M1074 544.500H1104M1209 544.500H1239" stroke="#0000ee"/>

<!-- canvas scrollbar -->
<rect x="1438" y="155" width="17" height="570" fill="#bdbdbd"/>
<rect x="1438.500" y="157.500" width="16" height="16" fill="url(#gv)" stroke="#fff"/>
<path d="M1442 168L1446 164L1450 168" fill="none" stroke="#555" stroke-width="2"/>
<rect x="1438.500" y="175.500" width="16" height="103" fill="url(#gs)" stroke="#fff"/>
<path d="M1442 224.500H1451M1442 226.500H1451M1442 228.500H1451M1442 230.500H1451" stroke="#666"/>
<rect x="1438.500" y="717.500" width="16" height="8" fill="url(#gv)" stroke="#888"/>

<!-- right strips -->
<rect x="1455" y="128" width="2" height="597" fill="#f2f2f2"/>
<rect x="1457" y="128" width="6" height="597" fill="#d8d8d8"/>
<rect x="1463" y="128" width="19" height="597" fill="#ababab"/>
<rect x="1457" y="412" width="6" height="24" fill="url(#gh)"/><rect x="1457" y="446" width="6" height="23" fill="#e0e0e0"/>
<path d="M1457 412.500H1463M1457 436.500H1463M1457 446.500H1463M1457 469.500H1463" stroke="#888"/>
<path d="M1461 422V427L1458 424.500Z" fill="#000"/><path d="M1458 456V461L1461 458.500Z" fill="#888"/>
<text transform="translate(1466,415) rotate(90)" class="w b" style="font-size:13.500px" textLength="54" lengthAdjust="spacingAndGlyphs">网络数据</text>
<rect x="1482" y="76" width="2" height="649" fill="#1c2030"/>
</svg>
</body></html>
